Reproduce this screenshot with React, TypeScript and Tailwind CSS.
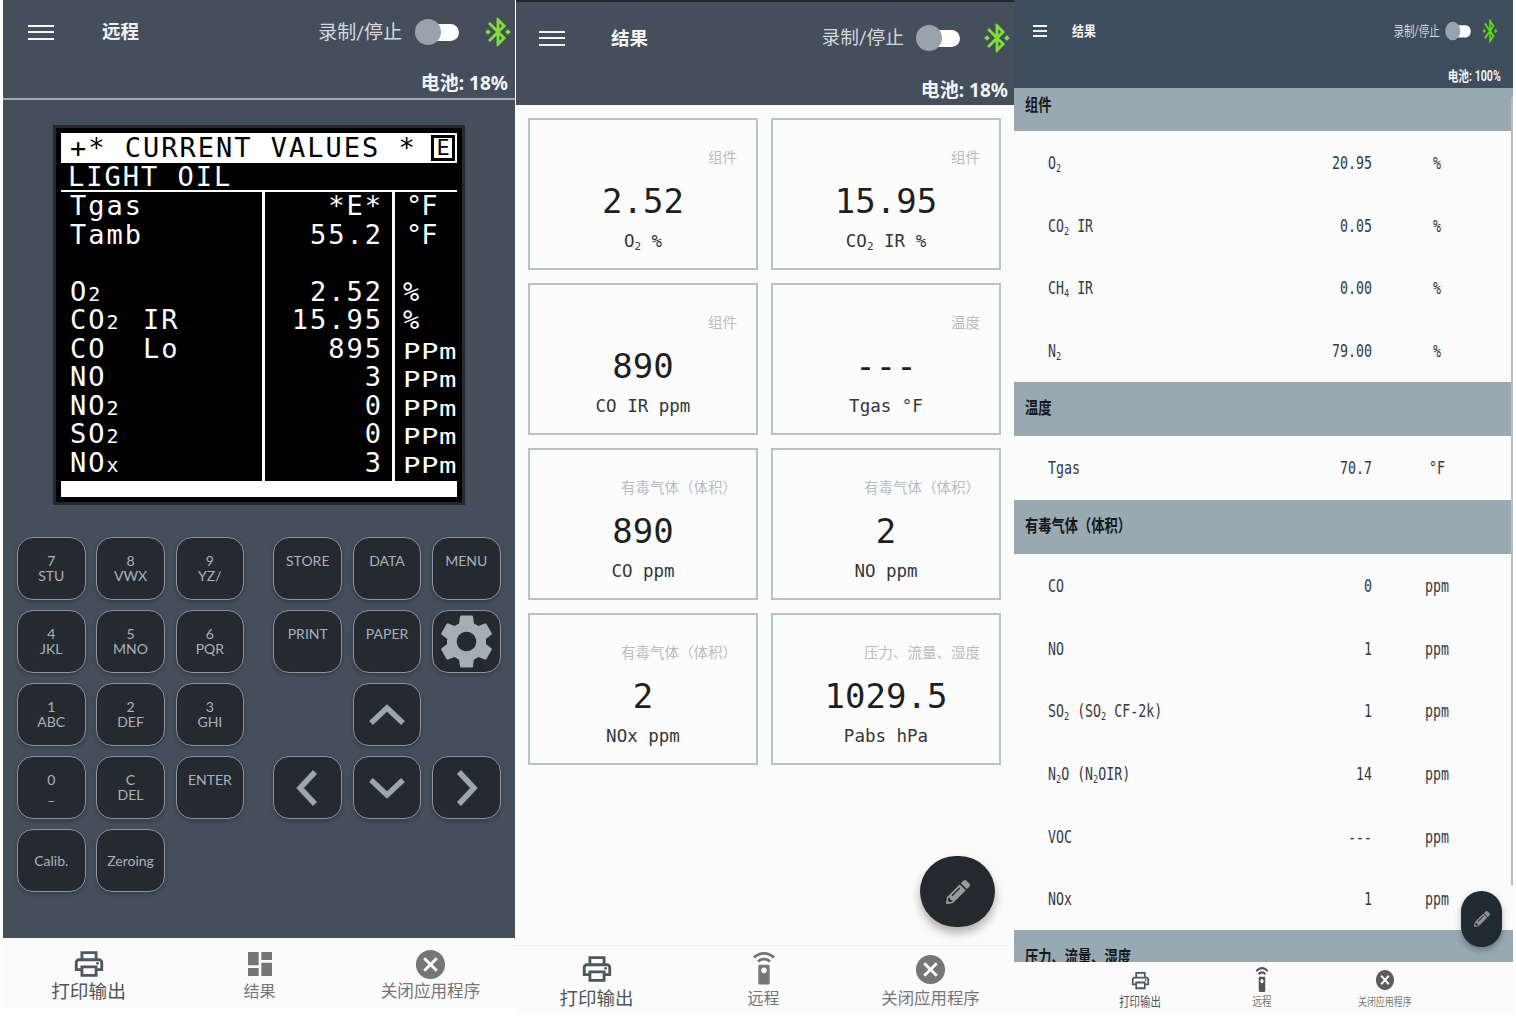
import type { ReactNode } from 'react';
import { MdBluetoothConnected, MdCancel, MdDashboard, MdOutlinePrint, MdSettings, MdSettingsRemote } from 'react-icons/md';
import { FaPencilAlt } from 'react-icons/fa';

const cjk = "font-['Roboto','Noto_Sans_CJK_SC',sans-serif]";
const mono = "font-['DejaVu_Sans_Mono','Noto_Sans_CJK_SC',monospace]";

function Hamburger({ className }: { className: string }) {
    return (
        <div className={`flex flex-col justify-between ${className}`}>
            <div className="h-[2px] bg-[#f2f3f4]" />
            <div className="h-[2px] bg-[#f2f3f4]" />
            <div className="h-[2px] bg-[#f2f3f4]" />
        </div>
    );
}

function Toggle() {
    return (
        <div className="relative w-[44px] h-[26px] flex items-center justify-end">
            <div className="w-[38px] h-[17px] rounded-full bg-white" />
            <div className="absolute left-0 top-0 w-[26px] h-[26px] rounded-full bg-[#9aa3ad]" />
        </div>
    );
}

function Arrow({ points }: { points: string }) {
    return (
        <svg width="44" height="44" viewBox="0 0 44 44" fill="none">
            <polyline points={points} stroke="#9aa7ae" strokeWidth="5.5" />
        </svg>
    );
}

function Key({ top, bottom, children, small }: { top?: string; bottom?: string; children?: ReactNode; small?: boolean }) {
    const base = "w-[68.5px] h-[63px] rounded-[16px] bg-[#252a31] border border-[#8b949c] shadow-[0_2px_4px_rgba(0,0,0,0.25)] text-[#a9b2ba] font-['Lato',sans-serif]";
    if (children) return <div className={`${base} flex items-center justify-center`}>{children}</div>;
    if (small) return <div className={`${base} flex items-center justify-center text-[14px]`}>{top}</div>;
    return (
        <div className={`${base} flex flex-col items-center pt-[15px] text-[14px] leading-[15px]`}>
            <span>{top}</span>
            <span>{bottom}</span>
        </div>
    );
}

function Gap() {
    return <div className="w-[68.5px] h-[63px]" />;
}

function Small({ children }: { children: string }) {
    return <span className="inline-block w-[18.26px] text-[20px]">{children}</span>;
}

const lcdRows: [ReactNode, string, string, boolean][] = [
    ['Tgas', '*E*', '°F', false],
    ['Tamb', '55.2', '°F', false],
    ['', '', '', false],
    [<>O<Small>2</Small></>, '2.52', '%', false],
    [<>CO<Small>2</Small> IR</>, '15.95', '%', false],
    ['CO  Lo', '895', 'PPm', true],
    ['NO', '3', 'PPm', true],
    [<>NO<Small>2</Small></>, '0', 'PPm', true],
    [<>SO<Small>2</Small></>, '0', 'PPm', true],
    [<>NO<Small>x</Small></>, '3', 'PPm', true],
];

function Lcd() {
    return (
        <div className="w-[412px] h-[380px] bg-black border-[3px] border-[#252a31] px-[5px] pt-[5px] text-white font-['DejaVu_Sans_Mono',monospace] text-[27px] leading-[28.5px] tracking-[2px] whitespace-pre">
            <div className="h-[30px] bg-white text-black pl-[9px] leading-[30px] flex items-center">
                <span>+* CURRENT VALUES * </span>
                <span className="w-[24px] h-[26px] -ml-[4px] border-[3px] border-black flex items-center justify-center text-[22px] tracking-normal">E</span>
            </div>
            <div className="h-[27px] pl-[7px] leading-[27px]">LIGHT OIL</div>
            <div className="h-[2px] bg-white" />
            <div className="flex h-[289px]">
                <div className="w-[204px] pl-[9px] border-r-[3px] border-white">
                    {lcdRows.map((r, i) => <div key={i} className="h-[28.5px]">{r[0]}</div>)}
                </div>
                <div className="w-[130px] pr-[9px] text-right border-r-[3px] border-white">
                    {lcdRows.map((r, i) => <div key={i} className="h-[28.5px]">{r[1]}</div>)}
                </div>
                <div className="pl-[8px]">
                    {lcdRows.map((r, i) => (
                        <div key={i} className="h-[28.5px]">
                            <div className={r[3] ? 'text-[29px] tracking-[0.5px] -translate-y-[1px] scale-y-[0.7] origin-bottom' : r[2] === '%' ? '' : 'pl-[3px] tracking-[-1px]'}>{r[2]}</div>
                        </div>
                    ))}
                </div>
            </div>
            <div className="h-[16px] bg-white" />
        </div>
    );
}

function NavItem({ icon, label, className }: { icon: ReactNode; label: string; className: string }) {
    return (
        <div className="flex-1 flex flex-col items-center">
            <div className="h-[30px] flex items-center justify-center">{icon}</div>
            <span className={className}>{label}</span>
        </div>
    );
}

function RemotePanel() {
    return (
        <div className="w-[516px] h-[1008px] flex flex-col">
            <div className="ml-[3px] mr-[1px] flex-1 bg-[#454f5c] flex flex-col">
                <div className="h-[100px] border-b-2 border-[#a3aab2] flex flex-col">
                    <div className={`flex items-center h-[26px] mt-[19px] ${cjk}`}>
                        <Hamburger className="w-[26px] h-[15px] ml-[25px]" />
                        <span className="ml-[48px] mt-[2px] text-[18.5px] font-bold text-[#eef0f2]">远程</span>
                        <span className="ml-auto mt-[2px] text-[19px] text-[#d6d9dc]">录制/停止</span>
                        <div className="ml-[13px]"><Toggle /></div>
                        <MdBluetoothConnected className="ml-[22px] text-[#7fe03a]" size={34} />
                    </div>
                    <div className={`mt-[26px] pr-[7px] text-right text-[19px] font-bold leading-[24px] text-[#f2f3f4] font-['Noto_Sans','Noto_Sans_CJK_SC',sans-serif]`}>电池: 18%</div>
                </div>
                <div className="ml-[50px] mt-[25px]"><Lcd /></div>
                <div className="mt-[32px] ml-[14px] flex">
                    <div className="grid grid-cols-3 gap-x-[10.8px] gap-y-[10px] content-start">
                        <Key top="7" bottom="STU" />
                        <Key top="8" bottom="VWX" />
                        <Key top="9" bottom="YZ/" />
                        <Key top="4" bottom="JKL" />
                        <Key top="5" bottom="MNO" />
                        <Key top="6" bottom="PQR" />
                        <Key top="1" bottom="ABC" />
                        <Key top="2" bottom="DEF" />
                        <Key top="3" bottom="GHI" />
                        <Key top="0" bottom="_" />
                        <Key top="C" bottom="DEL" />
                        <Key top="ENTER" />
                        <Key top="Calib." small />
                        <Key top="Zeroing" small />
                    </div>
                    <div className="ml-[29.4px] grid grid-cols-3 gap-x-[10.8px] gap-y-[10px] content-start">
                        <Key top="STORE" />
                        <Key top="DATA" />
                        <Key top="MENU" />
                        <Key top="PRINT" />
                        <Key top="PAPER" />
                        <Key><MdSettings size={65} className="text-[#a3aeb6] shrink-0" /></Key>
                        <Gap />
                        <Key><Arrow points="6,30 22,15 38,30" /></Key>
                        <Gap />
                        <Key><Arrow points="29,6 14,22 29,38" /></Key>
                        <Key><Arrow points="6,14 22,29 38,14" /></Key>
                        <Key><Arrow points="15,6 30,22 15,38" /></Key>
                    </div>
                </div>
            </div>
            <div className={`ml-[1px] h-[70px] shrink-0 bg-[#fbfbfb] flex pt-[11px] pl-[2px] ${cjk}`}>
                <NavItem icon={<MdOutlinePrint size={34} className="text-[#4d5661]" />} label="打印输出" className="text-[18.7px] leading-[26px] text-[#50555c]" />
                <NavItem icon={<MdDashboard size={32} className="text-[#767676]" />} label="结果" className="text-[16px] leading-[26px] text-[#767676]" />
                <NavItem icon={<MdCancel size={35} className="text-[#767676]" />} label="关闭应用程序" className="text-[16.6px] leading-[26px] text-[#767676]" />
            </div>
        </div>
    );
}

const cards: [string, string, ReactNode][] = [
    ['组件', '2.52', <>O<sub className="text-[11px]">2</sub> %</>],
    ['组件', '15.95', <>CO<sub className="text-[11px]">2</sub> IR %</>],
    ['组件', '890', 'CO IR ppm'],
    ['温度', '---', 'Tgas °F'],
    ['有毒气体（体积）', '890', 'CO ppm'],
    ['有毒气体（体积）', '2', 'NO ppm'],
    ['有毒气体（体积）', '2', 'NOx ppm'],
    ['压力、流量、湿度', '1029.5', 'Pabs hPa'],
];

function ResultCards() {
    return (
        <div className="w-[498px] h-[1015px] relative flex flex-col bg-[#fbfbfb]">
            <div className="h-[105px] shrink-0 bg-[#454e5b] border-t-[2px] border-[#23272d] flex flex-col">
                <div className={`flex items-center h-[26px] mt-[23px] ${cjk}`}>
                    <Hamburger className="w-[26px] h-[15px] ml-[23px]" />
                    <span className="ml-[46px] mt-[3px] text-[18.5px] font-bold text-[#f2f3f4]">结果</span>
                    <span className="ml-auto mt-[1px] text-[18.7px] text-[#d6d9dc]">录制/停止</span>
                    <div className="ml-[12px]"><Toggle /></div>
                    <MdBluetoothConnected className="ml-[20px] text-[#7fe03a]" size={34} />
                </div>
                <div className={`mt-[27px] pr-[6px] text-right text-[19px] font-bold leading-[24px] text-[#f2f3f4] font-['Noto_Sans','Noto_Sans_CJK_SC',sans-serif]`}>电池: 18%</div>
            </div>
            <div className="flex-1 pt-[13px] pl-[12px]">
                <div className="grid grid-cols-[230px_230px] auto-rows-[152px] gap-[13px]">
                    {cards.map((c, i) => (
                        <div key={i} className="border-2 border-[#b7c4c6] bg-[#fcfcfc] flex flex-col pt-[30px]">
                            <div className={`text-right pr-[19px] text-[14.5px] leading-[18px] text-[#b8bdc2] ${cjk}`}>{c[0]}</div>
                            <div className={`text-center text-[34px] leading-[40px] mt-[13px] text-[#1d1f22] ${mono}`}>{c[1]}</div>
                            <div className={`text-center text-[17.5px] leading-[22px] mt-[9px] text-[#33373c] ${mono}`}>{c[2]}</div>
                        </div>
                    ))}
                </div>
            </div>
            <div className={`h-[70px] shrink-0 -ml-[3px] border-t border-[#f3f3f3] flex pt-[8px] ${cjk}`}>
                <NavItem icon={<MdOutlinePrint size={34} className="text-[#4d5661]" />} label="打印输出" className="text-[18.5px] leading-[26px] mt-[2px] text-[#50555c]" />
                <NavItem icon={<MdSettingsRemote size={34} className="text-[#767676]" />} label="远程" className="text-[16px] leading-[26px] mt-[2px] text-[#767676]" />
                <NavItem icon={<MdCancel size={35} className="text-[#767676]" />} label="关闭应用程序" className="text-[16.4px] leading-[26px] mt-[2px] text-[#767676]" />
            </div>
            <div className="absolute left-[404px] top-[856px] w-[75px] h-[71px] rounded-full bg-[#25292e] shadow-[0_6px_10px_rgba(0,0,0,0.3)] flex items-center justify-center">
                <FaPencilAlt size={24} className="text-[#9a9a9a]" />
            </div>
        </div>
    );
}

function Sub({ children }: { children: string }) {
    return <sub className="text-[11px]">{children}</sub>;
}

const sections: { title: string; h: string; pb: string; rows: [ReactNode, string, string][] }[] = [
    {
        title: '组件',
        h: 'h-[43px]',
        pb: '',
        rows: [
            [<>O<Sub>2</Sub></>, '20.95', '%'],
            [<>CO<Sub>2</Sub> IR</>, '0.05', '%'],
            [<>CH<Sub>4</Sub> IR</>, '0.00', '%'],
            [<>N<Sub>2</Sub></>, '79.00', '%'],
        ],
    },
    { title: '温度', h: 'h-[54px]', pb: 'pb-[1.3px]', rows: [['Tgas', '70.7', '°F']] },
    {
        title: '有毒气体（体积）',
        h: 'h-[54px]',
        pb: '',
        rows: [
            ['CO', '0', 'ppm'],
            ['NO', '1', 'ppm'],
            [<>SO<Sub>2</Sub> (SO<Sub>2</Sub> CF-2k)</>, '1', 'ppm'],
            [<>N<Sub>2</Sub>O (N<Sub>2</Sub>OIR)</>, '14', 'ppm'],
            ['VOC', '---', 'ppm'],
            ['NOx', '1', 'ppm'],
        ],
    },
];

function ResultTable() {
    return (
        <div className="w-[499px] h-[1015px] relative flex flex-col bg-[#fbfbfb] overflow-hidden">
            <div className={`h-[88px] shrink-0 bg-[#3e4c5c] flex flex-col ${cjk}`}>
                <div className="flex items-center h-[24px] mt-[19px]">
                    <Hamburger className="w-[14px] h-[12px] ml-[19px]" />
                    <span className="ml-[25px] text-[14px] font-bold text-[#f2f3f4] scale-x-[0.85] origin-left">结果</span>
                    <span className="ml-auto mr-[-4px] text-[14px] text-[#d6d9dc] scale-x-[0.75] origin-right">录制/停止</span>
                    <div className="scale-x-[0.58] scale-y-[0.72]"><Toggle /></div>
                    <MdBluetoothConnected className="ml-[-4px] mr-[9px] text-[#5bdc12] scale-x-70" size={28} />
                </div>
                <div className="mt-[24px] pr-[16px] text-right text-[14px] leading-[18px] font-bold text-[#f2f3f4] scale-x-[0.76] origin-right">电池: 100%</div>
            </div>
            <div className="flex-1 overflow-hidden">
                {sections.map((s) => (
                    <div key={s.title}>
                        <div className={`${s.h} bg-[#98a9b1] flex items-center pl-[11px] text-[17px] font-bold text-[#14181b] ${cjk}`}>
                            <span className={`scale-x-[0.78] origin-left whitespace-nowrap ${s.h === 'h-[43px]' ? '-mt-[8px]' : ''}`}>{s.title}</span>
                        </div>
                        <div className={`text-[17px] text-[#363a3f] ${s.pb} ${mono}`}>
                            {s.rows.map((r, i) => (
                                <div key={i} className="h-[62.7px] pt-[3px] flex items-center">
                                    <div className="w-[34px]" />
                                    <span className="w-[200px] whitespace-nowrap scale-x-[0.78] origin-left">{r[0]}</span>
                                    <span className="w-[124px] text-right scale-x-[0.78] origin-right">{r[1]}</span>
                                    <span className="w-[130px] text-center scale-x-[0.78]">{r[2]}</span>
                                </div>
                            ))}
                        </div>
                    </div>
                ))}
                <div className="h-[40px] bg-[#98a9b1] pl-[11px] pt-[16px] text-[17px] font-bold leading-[22px] text-[#14181b]">
                    <span className={`inline-block scale-x-[0.78] origin-left whitespace-nowrap ${cjk}`}>压力、流量、湿度</span>
                </div>
            </div>
            <div className={`absolute left-0 right-0 top-[962px] h-[53px] bg-[#fbfbfb] flex pl-[65px] pr-[67px] pt-[3px] ${cjk}`}>
                <NavItem icon={<MdOutlinePrint size={23} className="text-[#4d5661] scale-x-90" />} label="打印输出" className="text-[13px] leading-[16px] -mt-[1px] text-[#50555c] scale-x-[0.8]" />
                <NavItem icon={<MdSettingsRemote size={26} className="text-[#555] scale-x-75" />} label="远程" className="text-[12px] leading-[16px] -mt-[1px] text-[#767676] scale-x-[0.8]" />
                <NavItem icon={<MdCancel size={24} className="text-[#5c5c5c] scale-x-90" />} label="关闭应用程序" className="text-[11.6px] leading-[16px] -mt-[1px] text-[#767676] scale-x-[0.77]" />
            </div>
            <div className="absolute right-[11px] top-[891px] w-[41px] h-[56px] rounded-full bg-[#1f2a33] shadow-[0_3px_6px_rgba(0,0,0,0.3)] flex items-center justify-center">
                <FaPencilAlt size={16} className="text-[#8f8f8f]" />
            </div>
            <div className="absolute right-[0px] top-[97px] w-[2px] h-[788px] bg-[#b6bec3]" />
        </div>
    );
}

export default function App() {
    return (
        <div className="w-[1516px] h-[1022px] bg-white flex overflow-hidden">
            <RemotePanel />
            <ResultCards />
            <ResultTable />
        </div>
    );
}
